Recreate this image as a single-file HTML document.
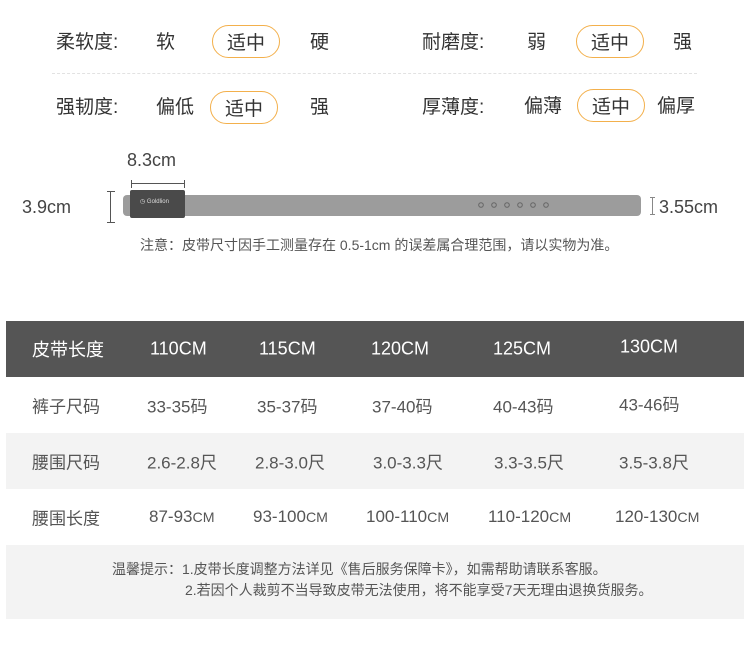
<!DOCTYPE html>
<html><head><meta charset="utf-8"><style>
*{margin:0;padding:0;box-sizing:border-box}
body{width:750px;height:669px;background:#fff;position:relative;overflow:hidden;font-family:"Liberation Sans","Noto Sans CJK SC",sans-serif;color:#333}
.a{position:absolute;white-space:nowrap;line-height:1}
.t{font-size:19px;color:#333}
.pill{position:absolute;border:1.5px solid #f3b04c;border-radius:17px;height:33px;width:68px;font-size:19px;display:flex;align-items:center;justify-content:center;color:#333}
.row{position:absolute;left:6px;width:738px;height:56px;font-size:17px;color:#555}
.row span{position:absolute;top:50%;transform:translateY(-50%);white-space:nowrap}
.h{background:#555;color:#fff;font-size:18px}
.g{background:#f3f3f3}
</style></head><body>
<div class="a t" style="left:56px;top:33px">柔软度:</div>
<div class="a t" style="left:156px;top:33px">软</div>
<div class="pill" style="left:212px;top:25px">适中</div>
<div class="a t" style="left:310px;top:33px">硬</div>
<div class="a t" style="left:422px;top:33px">耐磨度:</div>
<div class="a t" style="left:527px;top:33px">弱</div>
<div class="pill" style="left:576px;top:25px">适中</div>
<div class="a t" style="left:673px;top:33px">强</div>
<div style="position:absolute;left:52px;top:73px;width:645px;border-top:1px dashed #e2e2e2"></div>
<div class="a t" style="left:56px;top:98px">强韧度:</div>
<div class="a t" style="left:156px;top:98px">偏低</div>
<div class="pill" style="left:210px;top:91px">适中</div>
<div class="a t" style="left:310px;top:98px">强</div>
<div class="a t" style="left:422px;top:98px">厚薄度:</div>
<div class="a t" style="left:524px;top:97px">偏薄</div>
<div class="pill" style="left:577px;top:89px">适中</div>
<div class="a t" style="left:657px;top:97px">偏厚</div>

<div class="a" style="left:127px;top:151px;font-size:18px;color:#444">8.3cm</div>
<div style="position:absolute;left:131px;top:180px;width:54px;height:8px;border-left:1.5px solid #555;border-right:1.5px solid #555"></div>
<div style="position:absolute;left:131px;top:183px;width:54px;border-top:1.5px solid #555"></div>
<div class="a" style="left:22px;top:198px;font-size:18px;color:#444">3.9cm</div>
<div style="position:absolute;left:107px;top:191px;width:8px;height:32px;border-top:1.5px solid #555;border-bottom:1.5px solid #555"></div>
<div style="position:absolute;left:110px;top:191px;height:32px;border-left:1.5px solid #555"></div>
<div style="position:absolute;left:123px;top:195px;width:518px;height:21px;background:#9c9c9c;border-radius:4px"></div>
<div style="position:absolute;left:130px;top:190px;width:55px;height:28px;background:#4a4a4a;border-radius:2px;color:#ddd;font-size:6px;padding:8px 0 0 10px">◷ Goldlion</div>
<svg style="position:absolute;left:470px;top:200px" width="110" height="10"><g fill="none" stroke="#666" stroke-width="1"><circle cx="11" cy="5" r="2.3"/><circle cx="24" cy="5" r="2.3"/><circle cx="37" cy="5" r="2.3"/><circle cx="50" cy="5" r="2.3"/><circle cx="63" cy="5" r="2.3"/><circle cx="76" cy="5" r="2.3"/></g></svg>
<div style="position:absolute;left:650px;top:197px;width:5px;height:18px;border-top:1px solid #888;border-bottom:1px solid #888"></div>
<div style="position:absolute;left:652px;top:197px;height:18px;border-left:1px solid #888"></div>
<div class="a" style="left:659px;top:198px;font-size:18px;color:#444">3.55cm</div>
<div class="a" style="left:140px;top:238px;font-size:14px;color:#555">注意：皮带尺寸因手工测量存在 0.5-1cm 的误差属合理范围，请以实物为准。</div>

<div class="row h" style="top:321px"><span style="left:26px">皮带长度</span><span style="left:144px">110CM</span><span style="left:253px">115CM</span><span style="left:365px">120CM</span><span style="left:487px">125CM</span><span style="left:614px;margin-top:-2px">130CM</span></div>
<div class="row" style="top:377px"><span style="left:26px">裤子尺码</span><span style="left:141px">33-35码</span><span style="left:251px">35-37码</span><span style="left:366px">37-40码</span><span style="left:487px">40-43码</span><span style="left:613px;margin-top:-2px">43-46码</span></div>
<div class="row g" style="top:433px"><span style="left:26px">腰围尺码</span><span style="left:141px">2.6-2.8尺</span><span style="left:249px">2.8-3.0尺</span><span style="left:367px">3.0-3.3尺</span><span style="left:488px">3.3-3.5尺</span><span style="left:613px">3.5-3.8尺</span></div>
<div class="row" style="top:489px"><span style="left:26px">腰围长度</span><span style="left:143px">87-93<small>CM</small></span><span style="left:247px">93-100<small>CM</small></span><span style="left:360px">100-110<small>CM</small></span><span style="left:482px">110-120<small>CM</small></span><span style="left:609px">120-130<small>CM</small></span></div>
<div style="position:absolute;left:6px;top:545px;width:738px;height:74px;background:#f3f3f3;font-size:14px;color:#555">
<div class="a" style="left:106px;top:17px">温馨提示：1.皮带长度调整方法详见《售后服务保障卡》，如需帮助请联系客服。</div>
<div class="a" style="left:179px;top:38px">2.若因个人裁剪不当导致皮带无法使用，将不能享受7天无理由退换货服务。</div>
</div>
</body></html>
